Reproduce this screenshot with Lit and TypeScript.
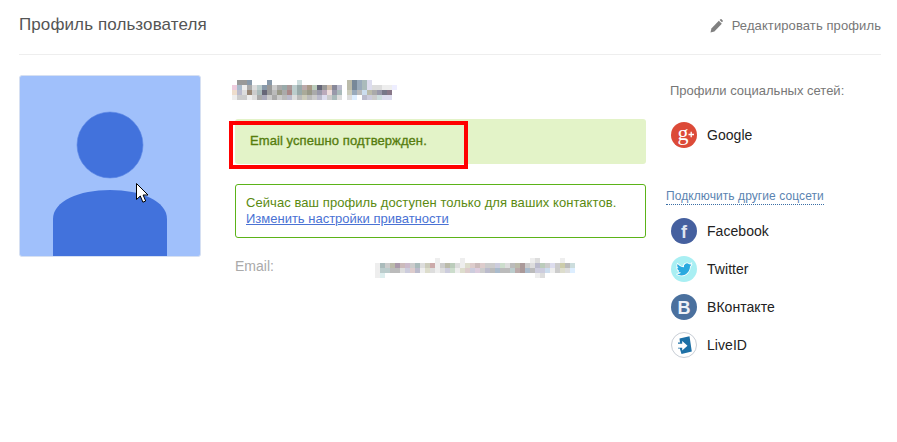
import { LitElement, html, css, svg } from "lit";
import { customElement } from "lit/decorators.js";

const NAME_ROWS = [
  "- 999 999 89a - - - 89a - - - - - cdd - - - - - - - - - bba 789 9ab abb dde - - - - - -",
  "ecd abc eee aaa ddd bcc 89a 999 ccc aaa 9aa a99 bcc 9aa baa a98 bcb 667 999 cba 889 bbc - bba 789 9ab abb dde ddd ddd eee eee eef",
  "edc bbc ddd 987 ccc abb 667 999 bbb 998 aaa a88 bcc 9aa aa9 998 aaa 99a bab edd 99a abb - ccb 9ab bbb cde bba aaa 99a 778 878 fff",
  "eee ccc ccc eee ddd aaa aab ccc aaa ccc bbb bbc ddd bbb ccb bbb ccc bbc dde ccc abb ddd - ddd def fff bbc ccd ccc cdd dde dde fff",
];
const EMAIL_ROWS = [
  "- - - - - - - - - - - - eee - - - - eee - - - - - - - - - - - - - eee ddd - - - - eee - - - - - - - - -",
  "eee abb ccc bba a9a cbb cbc ccc abb ddd ccb caa eee ccc bba bcb ddd eee ddc dcc cbb dcc ccc ccc ccd cdc ddd bbb bba a99 ccc ddd bbc bcb ccc dde ccc cca bbb cdd",
  "eee bcc bcc bbb bbb ddd ccd dcc bbc eee ddc ddd eee ddd ccd cdc eee ddc dcc ccd dcd ccc bbc bbb abc bbb bbb bcc baa a99 abc bbb ccd ccd cde eee ccc ddc ddd def",
  "eee dee - - - - - - - - - - - - - - - - - - - - - - - - - - - - - - eee ddd - - - - - - -",
];

@customElement("pixel-mosaic")
class PixelMosaic extends LitElement {
  static properties = { rows: { attribute: false } };
  rows: string[] = [];
  static styles = css`
    :host { display: block; }
    .row { display: flex; }
    .cell { width: 5px; height: 5px; flex: none; }
  `;
  render() {
    return this.rows.map(
      (r) => html`<div class="row">${r.split(" ").map((c) =>
        html`<div class="cell" style="background:${c === "-" ? "transparent" : "#" + c}"></div>`)}</div>`
    );
  }
}

const BIRD = "M23.953 4.57a10 10 0 01-2.825.775 4.958 4.958 0 002.163-2.723c-.951.555-2.005.959-3.127 1.184a4.92 4.92 0 00-8.384 4.482C7.69 8.095 4.067 6.13 1.64 3.162a4.822 4.822 0 00-.666 2.475c0 1.71.87 3.213 2.188 4.096a4.904 4.904 0 01-2.228-.616v.06a4.923 4.923 0 003.946 4.827 4.996 4.996 0 01-2.212.085 4.936 4.936 0 004.604 3.417 9.867 9.867 0 01-6.102 2.105c-.39 0-.779-.023-1.17-.067a13.995 13.995 0 007.557 2.209c9.053 0 13.998-7.496 13.998-13.985 0-.21 0-.42-.015-.63A9.935 9.935 0 0024 4.59z";

const ICONS: Record<string, unknown> = {
  google: svg`<circle cx="13" cy="13" r="13" fill="#dc4a38"/>
    <text x="6.5" y="18" font-family="Liberation Serif" font-weight="400" font-size="22" fill="#fff">g</text>
    <path d="M17.5 12.5h5.5M20.2 9.8v5.4" stroke="#fff" stroke-width="1.3" fill="none"/>`,
  facebook: svg`<circle cx="13" cy="13" r="13" fill="#45609f"/>
    <text x="13" y="20" text-anchor="middle" font-family="Liberation Sans" font-weight="700" font-size="18" fill="#dfe5f0">f</text>`,
  twitter: svg`<circle cx="13" cy="13" r="13" fill="#a9eff3"/>
    <g transform="translate(5.6 6) scale(.62)"><path d="${BIRD}" fill="#29a9df" stroke="#fff" stroke-width="2.4" paint-order="stroke"/></g>`,
  vk: svg`<circle cx="13" cy="13" r="13" fill="#4a709e"/>
    <text x="13" y="19.5" text-anchor="middle" font-family="Liberation Sans" font-weight="700" font-size="18" fill="#eef2f7">B</text>`,
  live: svg`<circle cx="13" cy="13" r="12.5" fill="#fff" stroke="#c8ced6"/>
    <path d="M8.5 6.5 L18.5 4.2 L20.8 19.5 L10.5 22 L8.8 16.5 H7 V10.5 H9z" fill="#1d70a6"/>
    <path d="M6 11.8h5.2V9l5.3 4.8-5.3 4.8v-2.8H6z" fill="#fff"/>`,
};

@customElement("app-root")
export class AppRoot extends LitElement {
  static styles = css`
    :host {
      display: block;
      width: 897px;
      height: 442px;
      background: #fff;
      font-family: "Liberation Sans", Arial, sans-serif;
      overflow: hidden;
    }
    .page { padding: 0 16px 0 19px; }
    .head {
      border-bottom: 1px solid #eee;
      display: flex;
      justify-content: space-between;
      align-items: flex-start;
      padding-top: 16px;
      box-sizing: content-box;
      height: 38px;
    }
    .title { font-size: 17px; letter-spacing: .1px; line-height: 18px; color: #555; }
    .edit { display: flex; align-items: center; gap: 9px; font-size: 13px; letter-spacing: .1px; line-height: 20px; color: #777; }
    .edit svg { display: block; }
    .body { display: flex; padding-top: 20px; }
    .avatar {
      position: relative;
      width: 182px;
      height: 182px;
      flex: none;
      box-sizing: border-box;
      border: 1px solid #d6e0f2;
      border-radius: 3px;
      background: #a0c0fb;
      margin-right: 34px;
    }
    .avatar svg.person { display: block; }
    .cursor { position: absolute; left: 116px; top: 107px; }
    .main { width: 411px; flex: none; margin-right: 24px; padding-top: 5px; }
    .success {
      position: relative;
      margin-top: 19px;
      height: 45px;
      box-sizing: border-box;
      background: #e3f3c8;
      border-radius: 3px;
      padding: 12px 15px 0;
      font-size: 13px;
      letter-spacing: .08px;
      line-height: 20px;
      color: #567d0e;
      -webkit-text-stroke: 0.35px #567d0e;
    }
    .mark {
      position: absolute;
      left: -6px;
      top: 2px;
      width: 239px;
      height: 48px;
      box-sizing: border-box;
      border: 4px solid #f00;
      pointer-events: none;
    }
    .info {
      margin-top: 20px;
      height: 54px;
      box-sizing: border-box;
      border: 1px solid #5bb318;
      border-radius: 3px;
      padding: 10px 10px 0;
      font-size: 13px;
      letter-spacing: .07px;
      line-height: 16px;
      color: #5a8a10;
    }
    .info a { color: #4a72d4; text-decoration: underline; letter-spacing: 0; }
    .email { display: flex; margin-top: 20px; }
    .email .label { width: 140px; font-size: 14px; line-height: 16px; color: #aaa; }
    .side { flex: 1; padding-top: 8px; }
    .side h3 { margin: 0; font-weight: 400; font-size: 13px; line-height: 16px; color: #777; }
    .net { display: flex; align-items: center; gap: 10px; margin-left: 1px; height: 26px; font-size: 14px; letter-spacing: .05px; color: #222; }
    .net svg { display: block; flex: none; overflow: visible; }
    .own { margin-top: 23px; }
    .connect {
      display: inline-block;
      margin: 40px 0 13px -4px;
      font-size: 12px;
      letter-spacing: .08px;
      line-height: 16px;
      color: #5b84b1;
      border-bottom: 1px dotted #3a6ea5;
    }
    .list { display: flex; flex-direction: column; gap: 12px; }
  `;

  net(key: string, label: string) {
    return html`<div class="net">
      <svg width="26" height="26" viewBox="0 0 26 26">${ICONS[key]}</svg>${label}
    </div>`;
  }

  render() {
    return html`<div class="page">
      <div class="head">
        <div class="title">Профиль пользователя</div>
        <div class="edit">
          <svg width="13" height="14" viewBox="0 0 13 14">
            <path d="M0.5 13.5l.9-3.9 7.4-7.8 3 2.9-7.4 7.8z" fill="#808080"/>
            <path d="M9.6 1l.9-.8c.3-.2.7-.2 1 0l1.2 1.2c.3.3.3.7 0 1l-.8.9z" fill="#808080"/>
          </svg>
          Редактировать профиль
        </div>
      </div>
      <div class="body">
        <div class="avatar">
          <svg class="person" width="180" height="180" viewBox="0 0 180 180">
            <circle cx="90" cy="69" r="33" fill="#4272dc" stroke="#5a86e4" stroke-width=".6"/>
            <path d="M33 180V143c0-18 26-29 57-29s57 11 57 29V180z" fill="#4272dc"/>
          </svg>
          <svg class="cursor" width="14" height="22" viewBox="0 0 14 22">
            <path d="M.5.5V16.5l3.8-3.5 2.6 6.2 2.8-1.2-2.6-6H12z" fill="#fff" stroke="#000" stroke-width="1"/>
          </svg>
        </div>
        <div class="main">
          <pixel-mosaic .rows=${NAME_ROWS} style="margin-left:-3px"></pixel-mosaic>
          <div class="success">Email успешно подтвержден.<div class="mark"></div></div>
          <div class="info">Сейчас ваш профиль доступен только для ваших контактов.<br /><a>Изменить настройки приватности</a></div>
          <div class="email">
            <div class="label">Email:</div>
            <pixel-mosaic .rows=${EMAIL_ROWS}></pixel-mosaic>
          </div>
        </div>
        <div class="side">
          <h3>Профили социальных сетей:</h3>
          <div class="own">${this.net("google", "Google")}</div>
          <div class="connect">Подключить другие соцсети</div>
          <div class="list">
            ${this.net("facebook", "Facebook")}
            ${this.net("twitter", "Twitter")}
            ${this.net("vk", "ВКонтакте")}
            ${this.net("live", "LiveID")}
          </div>
        </div>
      </div>
    </div>`;
  }
}
void PixelMosaic;
